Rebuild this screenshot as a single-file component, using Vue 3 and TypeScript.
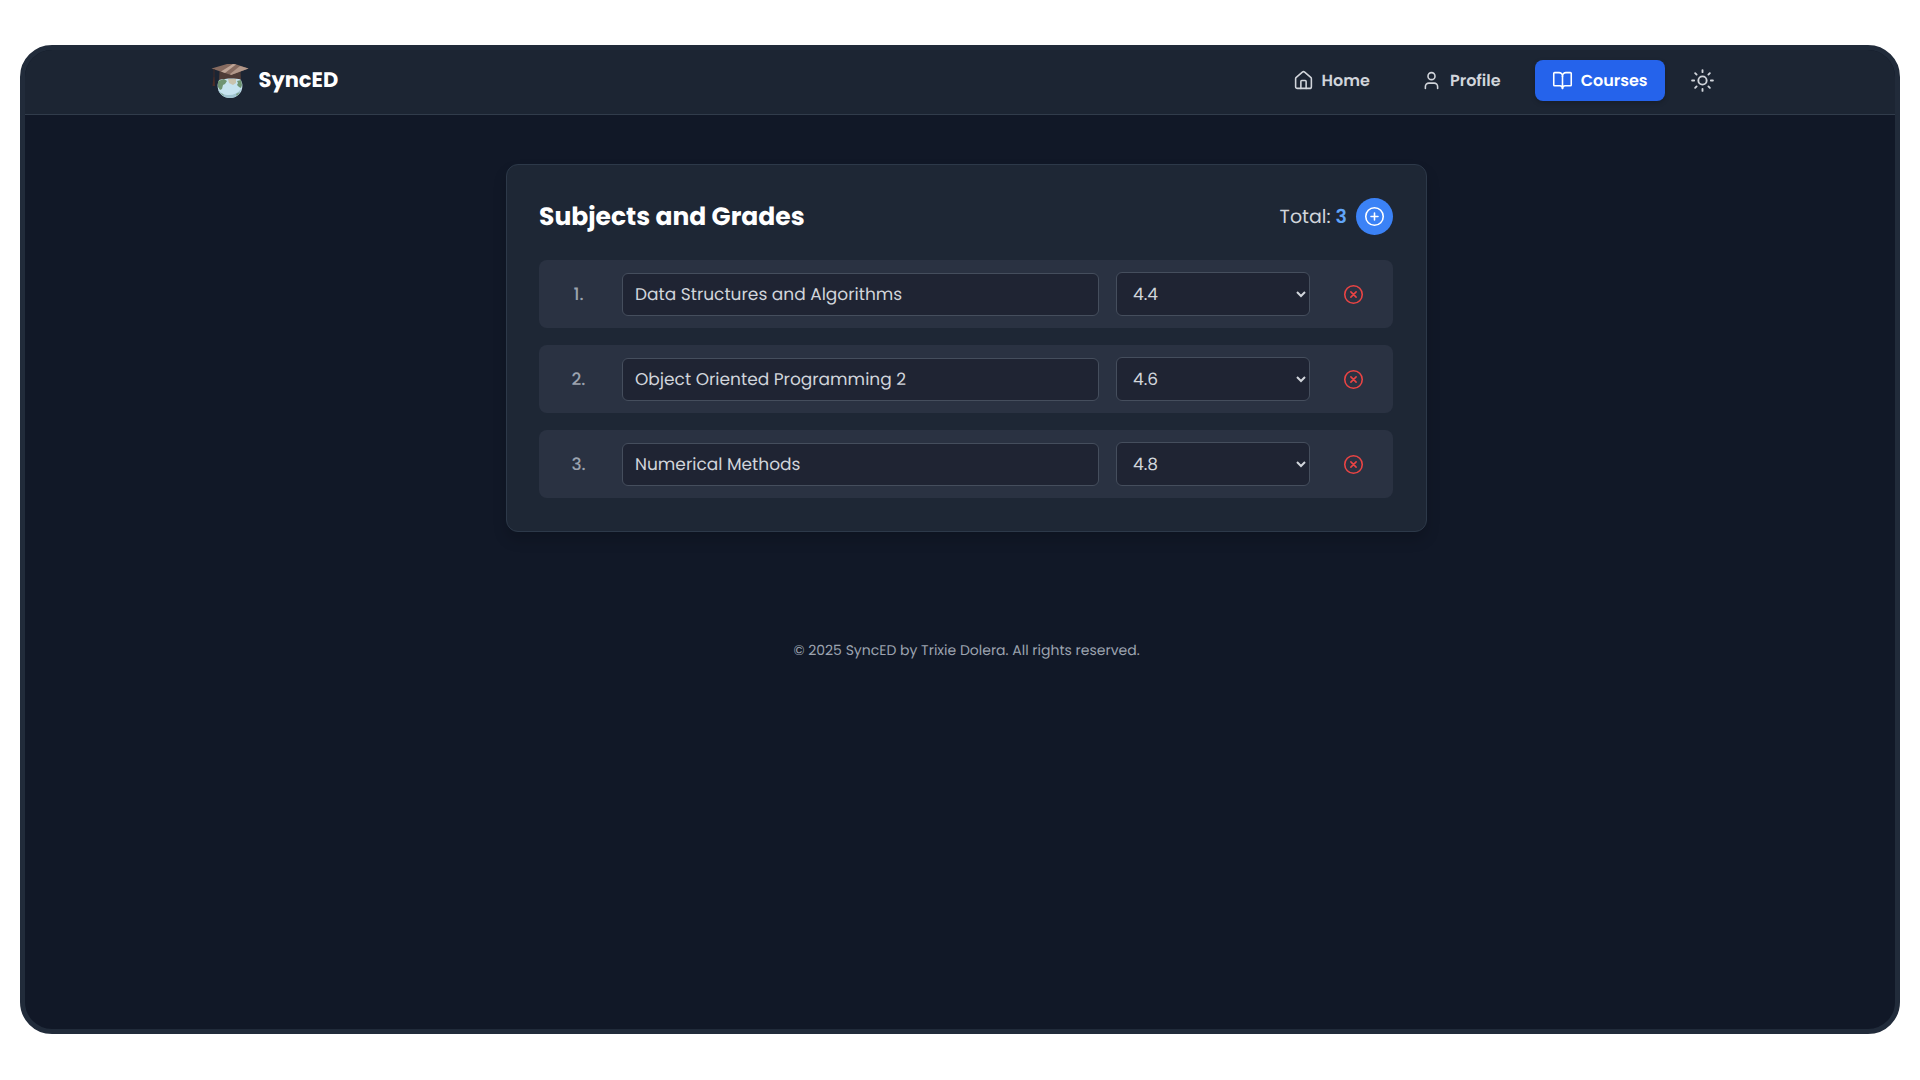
<script setup lang="ts">
import { ref } from 'vue'

interface Subject {
  id: number
  name: string
  grade: string
}

const grades: string[] = ['4.0', '4.2', '4.4', '4.6', '4.8', '5.0']

const subjects = ref<Subject[]>([
  { id: 1, name: 'Data Structures and Algorithms', grade: '4.4' },
  { id: 2, name: 'Object Oriented Programming 2', grade: '4.6' },
  { id: 3, name: 'Numerical Methods', grade: '4.8' },
])

let nextId = 4

function addSubject(): void {
  subjects.value.push({ id: nextId++, name: '', grade: '4.0' })
}

function removeSubject(id: number): void {
  subjects.value = subjects.value.filter((s) => s.id !== id)
}
</script>

<template>
  <div class="frame">
    <header class="topbar">
      <div class="topbar-inner">
        <a class="brand" href="#">
          <svg class="brand-mark" viewBox="0 0 38 34" aria-hidden="true">
            <ellipse cx="19" cy="22" rx="12.4" ry="12" fill="#c6e3ef" />
            <path d="M7 25c2 4 6 6 11 6s9-2 12-6c-1 5-5 9-11 9S8 30 7 25z" fill="#9fc3cf" />
            <path d="M7 17l6-2 3 2-2 3-2 1-1 4-2 1-2-3z" fill="#6f9472" />
            <path d="M26 17l4-1 1 5-1 3-2-1-2-2 1-2z" fill="#6f9472" />
            <path d="M9 29l3 1 1 2z" fill="#7c9f83" />
            <path d="M25 30l4-2-3 4z" fill="#7c9f83" />
            <path d="M17 15h8v4l-3 2-4-2z" fill="#c9c3ae" />
            <path d="M8.5 7h21l.5 8.500c-6-1.500-15-1.500-22 .5z" fill="#4f3c37" />
            <path d="M.5 4.500L16 0h8l13.500 4.500L20 11z" fill="#866b60" />
            <path d="M22 0l3 .5L14 9l-4-1.500z" fill="#bfa698" />
            <path d="M29 2l8.500 2.500L20 11l-1-1z" fill="#b2988a" />
            <path d="M3 5v8" stroke="#3f2b28" stroke-width="1" fill="none" />
            <path d="M2.500 13h1l.5 9H1.500z" fill="#4d2d27" />
          </svg>
          <span class="brand-name">SyncED</span>
        </a>
        <nav class="nav" aria-label="Main">
          <a class="nav-link" href="#home">
            <svg class="icon" viewBox="0 0 24 24" aria-hidden="true">
              <path d="M15 21v-8a1 1 0 0 0-1-1h-4a1 1 0 0 0-1 1v8" />
              <path d="M3 10a2 2 0 0 1 .709-1.528l7-5.999a2 2 0 0 1 2.582 0l7 5.999A2 2 0 0 1 21 10v9a2 2 0 0 1-2 2H5a2 2 0 0 1-2-2z" />
            </svg>
            <span>Home</span>
          </a>
          <a class="nav-link" href="#profile">
            <svg class="icon" viewBox="0 0 24 24" aria-hidden="true">
              <path d="M19 21v-2a4 4 0 0 0-4-4H9a4 4 0 0 0-4 4v2" />
              <circle cx="12" cy="7" r="4" />
            </svg>
            <span>Profile</span>
          </a>
          <a class="nav-link active" href="#courses" aria-current="page">
            <svg class="icon" viewBox="0 0 24 24" aria-hidden="true">
              <path d="M12 7v14" />
              <path d="M3 18a1 1 0 0 1-1-1V4a1 1 0 0 1 1-1h5a4 4 0 0 1 4 4 4 4 0 0 1 4-4h5a1 1 0 0 1 1 1v13a1 1 0 0 1-1 1h-6a3 3 0 0 0-3 3 3 3 0 0 0-3-3z" />
            </svg>
            <span>Courses</span>
          </a>
          <button class="theme-toggle" type="button" aria-label="Switch theme">
            <svg class="icon large" viewBox="0 0 24 24" aria-hidden="true">
              <circle cx="12" cy="12" r="4" />
              <path d="M12 2v2M12 20v2M4.930 4.930l1.410 1.410M17.660 17.660l1.410 1.410M2 12h2M20 12h2M6.340 17.660l-1.410 1.410M19.070 4.930l-1.410 1.410" />
            </svg>
          </button>
        </nav>
      </div>
    </header>

    <main class="content">
      <section class="card" aria-labelledby="subjects-title">
        <div class="card-head">
          <h1 id="subjects-title" class="title">Subjects and Grades</h1>
          <div class="summary">
            <span>Total: <strong class="count">{{ subjects.length }}</strong></span>
            <button class="add" type="button" aria-label="Add subject" @click="addSubject">
              <svg class="icon" viewBox="0 0 24 24" aria-hidden="true">
                <circle cx="12" cy="12" r="10" />
                <path d="M8 12h8M12 8v8" />
              </svg>
            </button>
          </div>
        </div>

        <ul class="rows">
          <li v-for="(subject, index) in subjects" :key="subject.id" class="row">
            <label class="number" :for="`subject-${subject.id}`">{{ index + 1 }}.</label>
            <input :id="`subject-${subject.id}`" v-model="subject.name" class="field name" type="text" />
            <select v-model="subject.grade" class="field grade" :aria-label="`Grade for ${subject.name}`">
              <option v-for="g in grades" :key="g" :value="g">{{ g }}</option>
            </select>
            <button class="remove" type="button" :aria-label="`Remove ${subject.name}`" @click="removeSubject(subject.id)">
              <svg class="icon" viewBox="0 0 24 24" aria-hidden="true">
                <circle cx="12" cy="12" r="10" />
                <path d="M15 9l-6 6M9 9l6 6" />
              </svg>
            </button>
          </li>
        </ul>
      </section>
    </main>

    <footer class="footer">© 2025 SyncED by Trixie Dolera. All rights reserved.</footer>
  </div>
</template>

<style>
body {
  background: #ffffff;
}
</style>

<style scoped>
.frame,
.frame * {
  box-sizing: border-box;
}

.frame {
  display: flow-root;
  min-height: calc(100vh - 91px);
  margin: 45px 20px 46px;
  border: 5px solid #212b3a;
  border-radius: 32px;
  overflow: hidden;
  background: #111827;
  color: #d1d5db;
  font-family: Poppins, Inter, sans-serif;
  font-size: 16px;
  line-height: 24px;
  text-rendering: geometricPrecision;
}

.icon {
  width: 21px;
  height: 21px;
  flex: none;
  fill: none;
  stroke: currentColor;
  stroke-width: 1.8;
  stroke-linecap: round;
  stroke-linejoin: round;
}

.icon.large {
  width: 25px;
  height: 25px;
}

.topbar {
  padding-left: 13px;
  border-bottom: 1px solid #313c4b;
  background: #1c2533;
}

.topbar-inner {
  display: flex;
  align-items: center;
  justify-content: space-between;
  max-width: 1546px;
  height: 64px;
  margin: 0 auto;
  padding: 0 17px 3px;
}

.brand {
  display: flex;
  align-items: center;
  gap: 10px;
  color: #ffffff;
  text-decoration: none;
}

.brand-mark {
  width: 38px;
  height: 34px;
}

.brand-name {
  font-size: 21px;
  font-weight: 700;
  line-height: 34px;
}

.nav {
  display: flex;
  align-items: center;
  gap: 17px;
}

.nav-link {
  display: flex;
  align-items: center;
  gap: 8px;
  height: 41px;
  padding: 0 17px;
  border-radius: 8px;
  color: #d1d5db;
  font-weight: 600;
  text-decoration: none;
}

.nav-link.active {
  background: #2563eb;
  color: #ffffff;
  box-shadow: 0 2px 5px rgba(0, 0, 0, 0.2);
}

.theme-toggle,
.add,
.remove {
  display: flex;
  align-items: center;
  justify-content: center;
  padding: 0;
  border: 0;
  background: none;
  color: inherit;
  cursor: pointer;
}

.theme-toggle {
  width: 41px;
  height: 41px;
}

.content {
  padding: 49px 0 0 13px;
}

.card {
  max-width: 921px;
  margin: 0 auto;
  padding: 33px 33px 33px 32px;
  border: 1px solid #2d3949;
  border-radius: 12px;
  background: #1e2735;
  box-shadow: 0 8px 14px rgba(0, 0, 0, 0.16);
}

.card-head {
  display: flex;
  align-items: center;
  justify-content: space-between;
  margin-bottom: 25px;
}

.title {
  margin: 0;
  color: #ffffff;
  font-size: 25px;
  font-weight: 700;
  line-height: 36px;
}

.summary {
  display: flex;
  align-items: center;
  gap: 9px;
  font-size: 19px;
}

.count {
  color: #60a5fa;
  font-weight: 600;
}

.add {
  width: 37px;
  height: 37px;
  border-radius: 50%;
  background: #3b82f6;
  color: #ffffff;
}

.rows {
  display: flex;
  flex-direction: column;
  gap: 17px;
  margin: 0;
  padding: 0;
  list-style: none;
}

.row {
  display: flex;
  align-items: center;
  gap: 17px;
  padding: 12px 13px;
  border-radius: 8px;
  background: #2a3242;
}

.number {
  width: 53px;
  flex: none;
  color: #9ca3af;
  font-size: 17px;
  font-weight: 500;
  text-align: center;
}

.field {
  height: 44px;
  border: 1px solid #454e5d;
  border-radius: 6px;
  background: #1f2433;
  color: #d1d5db;
  font-family: inherit;
  font-size: 17px;
  text-rendering: inherit;
}

.name {
  flex: 1;
  align-self: flex-end;
  height: 43px;
  min-width: 0;
  padding: 0 12px 2px;
}

.grade {
  width: 194px;
  flex: none;
  padding: 0 12px;
}

.remove {
  width: 53px;
  height: 44px;
  flex: none;
  color: #ea4444;
}

.footer {
  padding: 106px 0 24px 13px;
  color: #9ca3af;
  font-size: 14px;
  text-align: center;
}
</style>
